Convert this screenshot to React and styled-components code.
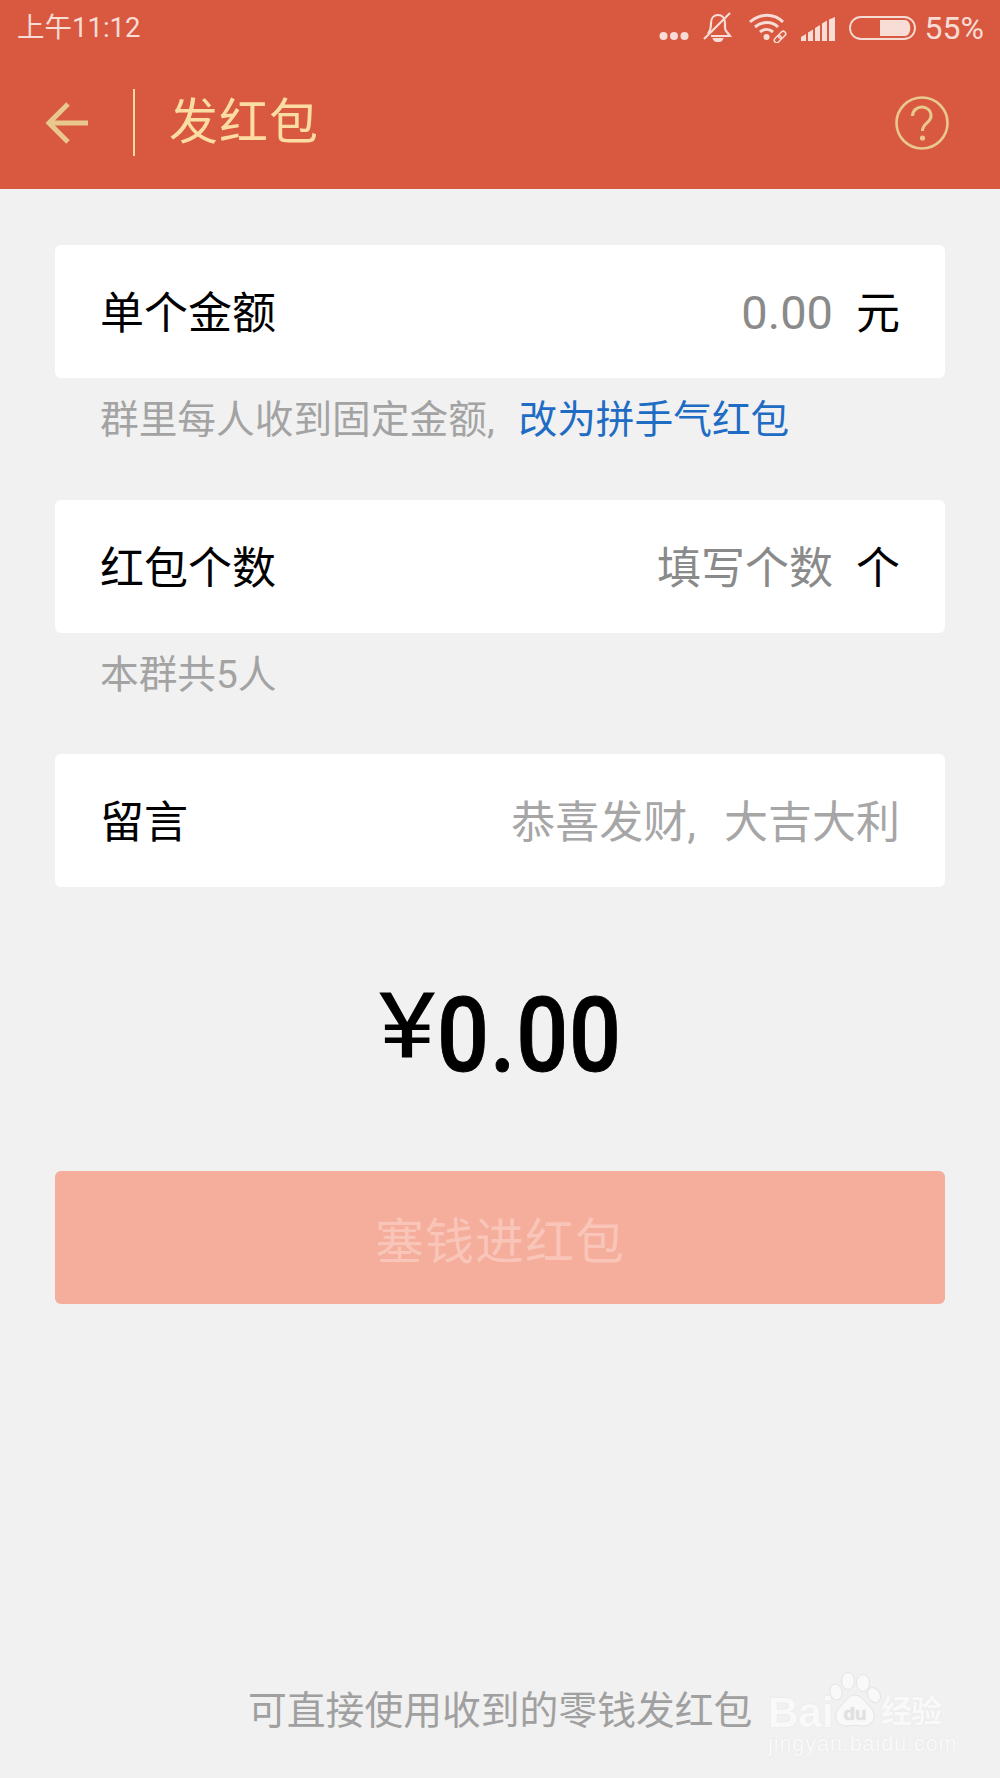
import React from "react";
import styled, { createGlobalStyle } from "styled-components";

const Global = createGlobalStyle`
  html, body { margin: 0; padding: 0; background: #f1f1f1; }
  body { font-family: "Roboto", "Noto Sans CJK SC", sans-serif; }
`;
const Page = styled.div`
  width: 1000px; height: 1778px; background: #f1f1f1; position: relative; overflow: hidden;
  display: flex; flex-direction: column;
`;
const Header = styled.header`
  height: 189px; background: #d95940; display: flex; flex-direction: column; flex-shrink: 0;
`;
const StatusBar = styled.div`
  height: 56px; padding: 0 16px 0 17px; display: flex; align-items: center; justify-content: space-between;
  color: #f8dcd6; font-size: 27.5px; line-height: 1;
`;
const StatusIcons = styled.div`
  display: flex; align-items: center;
`;
const Percent = styled.span`
  font-size: 32px; margin-left: 9px;
`;
const Toolbar = styled.div`
  flex: 1; display: flex; align-items: center; padding: 0 51px 0 44px;
`;
const Divider = styled.div`
  width: 2px; height: 67px; background: #f6d9a0; margin: 0 34px 0 44px;
`;
const Title = styled.h1`
  flex: 1; margin: 0; font-size: 49px; font-weight: 400; color: #fbdca3; line-height: 1; letter-spacing: 1px;
`;
const Main = styled.main`
  padding: 56px 55px 0; display: flex; flex-direction: column;
`;
const Card = styled.div`
  height: 133px; flex-shrink: 0; box-sizing: border-box; padding: 0 45px 3px; background: #fff; border-radius: 6px; display: flex; align-items: center;
  justify-content: space-between; font-size: 44px; color: #000;
`;
const Value = styled.span`
  color: ${p => p.$light ? "#a6a6a6" : "#8a8a8a"};
  font-size: 44px;
`;
const Figure = styled.span`
  color: #8a8a8a; font-size: 47px;
`;
const Unit = styled.span`
  margin-left: 23px; color: #000;
`;
const Comma = styled.span`
  margin-right: ${p => p.$gap}px;
`;
const Hint = styled.p`
  margin: 0; height: 121.5px; flex-shrink: 0; padding: 20px 0 0 45px; box-sizing: border-box; font-size: 38.7px; line-height: 44px; color: #a3a3a3;
`;
const HintLink = styled.span`
  color: #1f6cc4;
`;
const Amount = styled.div`
  margin-top: 96px; height: 105px; display: flex; justify-content: center; align-items: baseline; color: #000;
  font-size: 104px; line-height: 105px;
`;
const Yen = styled.span`
  font-size: 91px; position: relative; top: -14px; margin-right: 1px;
  transform: scaleX(1.2); transform-origin: right center; display: inline-block;
`;
const Digits = styled.span`
  display: inline-block; width: 175px; white-space: nowrap; font-weight: 500; letter-spacing: 1px;
  -webkit-text-stroke: 1px #000;
  transform: scaleX(.88); transform-origin: left center;
`;
const Button = styled.button`
  margin-top: 83px; height: 133px; border: 0; border-radius: 6px; background: #f4ae9b; color: #f9c5b9;
  font-family: inherit; font-size: 49px; padding: 0; letter-spacing: 1px;
`;
const Footer = styled.p`
  position: absolute; left: 248px; top: 1689px; margin: 0; font-size: 38.8px; line-height: 44px; color: #a0a0a0;
`;
const Watermark = styled.div`
  position: absolute; left: 768px; top: 1672px; width: 180px; height: 90px; color: #f9f9f9;
  text-shadow: 0 0 2px #e4e4e4;
`;
const LogoWord = styled.span`
  position: absolute; left: 0; top: 20px; font-family: "Liberation Sans", sans-serif; font-weight: 700; font-size: 42px; line-height: 1;
`;
const LogoCn = styled.span`
  position: absolute; left: 113px; top: 24px; font-size: 31px; font-weight: 700; line-height: 1; white-space: nowrap; letter-spacing: -1px;
`;
const LogoUrl = styled.div`
  position: absolute; left: 0; top: 62px; font-family: "Liberation Sans", sans-serif; font-size: 21.5px; line-height: 1; letter-spacing: .95px;
  white-space: nowrap;
`;
const Paw = styled.svg`
  position: absolute; left: 60px; top: 0;
`;

const Dots = () => (
  <svg width="30" height="10" viewBox="0 0 30 10" style={{ marginRight: 14, marginTop: 16 }}>
    <circle cx="4.500" cy="5" r="4" fill="#f8dcd6" /><circle cx="15" cy="5" r="4" fill="#f8dcd6" /><circle cx="25.500" cy="5" r="4" fill="#f8dcd6" />
  </svg>
);
const Bell = () => (
  <svg width="30" height="32" viewBox="0 0 30 32" fill="none" stroke="#f8dcd6" strokeWidth="2.200" style={{ marginRight: 15 }}>
    <path d="M5 22 C8 18 8 15 8 11 C8 6 11 3 15 3 C19 3 22 6 22 11 V16 C22 19 25 21 27 24 H8" />
    <path d="M1 27 L27 1" /><path d="M11 27 H19 C18 29.500 12 29.500 11 27Z" fill="#f8dcd6" />
  </svg>
);
const Wifi = () => (
  <svg width="40" height="30" viewBox="0 0 40 30" fill="none" style={{ marginRight: 13 }}>
    <g stroke="#f8dcd6" strokeWidth="3">
      <path d="M2 9 C12 0 26 0 35 9" /><path d="M7 14 C14 8 24 8 30 14" /><path d="M12 19 C16 15.500 21 15.500 25 19" />
    </g>
    <circle cx="18.500" cy="24" r="3" fill="#f8dcd6" />
    <g stroke="#f8dcd6" strokeWidth="1.500" transform="rotate(-45 32 24)">
      <rect x="25" y="21.500" width="8" height="5" rx="2.500" /><rect x="31" y="21.500" width="8" height="5" rx="2.500" />
    </g>
  </svg>
);
const Signal = () => (
  <svg width="35" height="24" viewBox="0 0 35 24" fill="#f8dcd6" style={{ marginRight: 13, marginTop: 2 }}>
    <path d="M0 24 V20 L5 17 V24Z M7 24 V15.500 L12 12.500 V24Z M14 24 V11 L19 8 V24Z M21 24 V6.500 L26 3.500 V24Z M28 24 V2.500 L34 0 V24Z" />
  </svg>
);
const Battery = () => (
  <svg width="67" height="24" viewBox="0 0 67 24" fill="none">
    <rect x="1" y="1" width="65" height="22" rx="11" stroke="#f8dcd6" strokeWidth="1.800" />
    <path d="M31 4 H56 C63 4 63 20 56 20 H31Z" fill="#f8dcd6" />
  </svg>
);
const Back = () => (
  <svg width="45" height="44" viewBox="0 0 45 44" fill="none" stroke="#e8c88c" strokeWidth="5">
    <path d="M24 3 L5 22 L24 41" /><path d="M5 22 H44" />
  </svg>
);
const Help = () => (
  <svg width="54" height="54" viewBox="0 0 54 54" fill="none" stroke="#e8c88c" strokeWidth="2.600">
    <circle cx="27" cy="27" r="25.500" />
    <path d="M17.500 20 C18 8 36 8 36 20 C36 27 27.500 27 27.500 35" strokeWidth="3" />
    <circle cx="27.500" cy="42" r="2.600" fill="#e8c88c" stroke="none" />
  </svg>
);
const PawIcon = () => (
  <Paw width="54" height="56" viewBox="0 0 54 56" fill="#f9f9f9" stroke="#e4e4e4" strokeWidth="1">
    <ellipse cx="20" cy="9" rx="6.500" ry="8.500" /><ellipse cx="35" cy="11" rx="6.500" ry="8.500" />
    <ellipse cx="8" cy="20" rx="6" ry="8" transform="rotate(-15 8 20)" /><ellipse cx="46" cy="23" rx="6" ry="8" transform="rotate(-30 46 23)" />
    <path d="M27 23 C34 23 37 31 43 36 C50 44 44 55 34 54 C30 53 24 53 20 54 C9 55 4 44 11 36 C17 31 20 23 27 23Z" />
    <text x="27" y="48" textAnchor="middle" fontSize="19" fontFamily="Liberation Sans" fontWeight="700" fill="#e0e0e0" stroke="none">du</text>
  </Paw>
);

export default function App() {
  return (
    <Page>
      <Global />
      <Header>
        <StatusBar>
          <span>上午11:12</span>
          <StatusIcons><Dots /><Bell /><Wifi /><Signal /><Battery /><Percent>55%</Percent></StatusIcons>
        </StatusBar>
        <Toolbar>
          <Back />
          <Divider />
          <Title>发红包</Title>
          <Help />
        </Toolbar>
      </Header>
      <Main>
        <Card><span>单个金额</span><span><Figure>0.00</Figure><Unit>元</Unit></span></Card>
        <Hint>群里每人收到固定金额<Comma $gap={24}>,</Comma><HintLink>改为拼手气红包</HintLink></Hint>
        <Card><span>红包个数</span><span><Value>填写个数</Value><Unit>个</Unit></span></Card>
        <Hint>本群共5人</Hint>
        <Card><span>留言</span><Value $light>恭喜发财<Comma $gap={28}>,</Comma>大吉大利</Value></Card>
        <Amount><Yen>¥</Yen><Digits>0.00</Digits></Amount>
        <Button>塞钱进红包</Button>
      </Main>
      <Footer>可直接使用收到的零钱发红包</Footer>
      <Watermark>
        <LogoWord>Bai</LogoWord>
        <PawIcon />
        <LogoCn>经验</LogoCn>
        <LogoUrl>jingyan.baidu.com</LogoUrl>
      </Watermark>
    </Page>
  );
}
